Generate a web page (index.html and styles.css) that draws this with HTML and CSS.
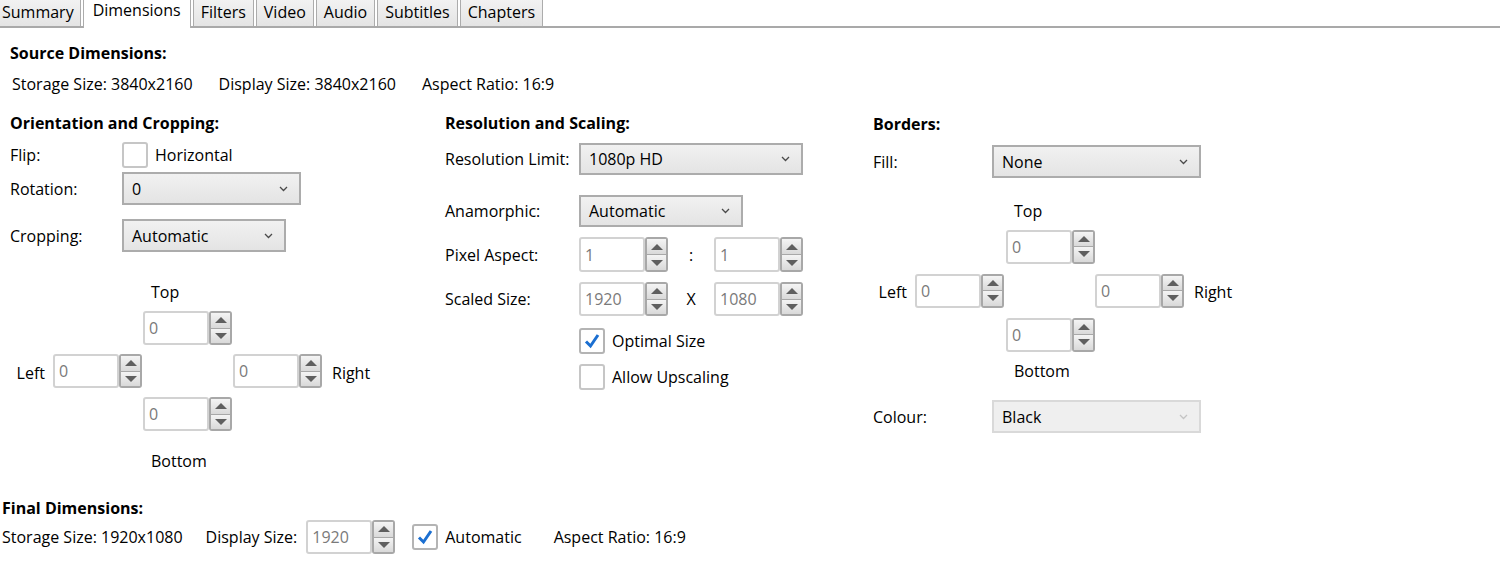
FILE: index.html
```html
<!DOCTYPE html>
<html lang="en">
<head>
    <meta charset="UTF-8">
    <title>Dimensions</title>
    <link rel="stylesheet" href="styles.css">
</head>
<body>
    <div class="tabs">
        <div class="tab tab-first">Summary</div>
        <div class="tab active">Dimensions</div>
        <div class="tab">Filters</div>
        <div class="tab">Video</div>
        <div class="tab">Audio</div>
        <div class="tab">Subtitles</div>
        <div class="tab">Chapters</div>
    </div>

    <div class="content">
        <div class="heading source-heading">Source Dimensions:</div>
        <div class="info-row">
            <span>Storage Size: 3840x2160</span>
            <span>Display Size: 3840x2160</span>
            <span>Aspect Ratio: 16:9</span>
        </div>

        <div class="columns">
            <!-- orientation and cropping -->
            <div class="col col-orient">
                <div class="heading">Orientation and Cropping:</div>
                <div class="field flip-row">
                    <span class="field-label">Flip:</span>
                    <span class="check"></span>
                    <span class="check-text">Horizontal</span>
                </div>
                <div class="field rotation-row">
                    <span class="field-label">Rotation:</span>
                    <div class="select select-rotation"><span>0</span><svg class="chev" viewBox="0 0 9 6"><polyline points="1,1 4.5,4.5 8,1"/></svg></div>
                </div>
                <div class="field cropping-row">
                    <span class="field-label">Cropping:</span>
                    <div class="select select-crop"><span>Automatic</span><svg class="chev" viewBox="0 0 9 6"><polyline points="1,1 4.5,4.5 8,1"/></svg></div>
                </div>

                <div class="cross cross-crop">
                    <span class="cross-top">Top</span>
                    <div class="spin pos-top"><input class="spin-input" value="0"><div class="spin-btn"><span class="arrow-up"></span><span class="arrow-down"></span></div></div>
                    <span class="cross-left">Left</span>
                    <div class="spin pos-left"><input class="spin-input" value="0"><div class="spin-btn"><span class="arrow-up"></span><span class="arrow-down"></span></div></div>
                    <div class="spin pos-right"><input class="spin-input" value="0"><div class="spin-btn"><span class="arrow-up"></span><span class="arrow-down"></span></div></div>
                    <span class="cross-right">Right</span>
                    <div class="spin pos-bottom"><input class="spin-input" value="0"><div class="spin-btn"><span class="arrow-up"></span><span class="arrow-down"></span></div></div>
                    <span class="cross-bottom">Bottom</span>
                </div>
            </div>

            <!-- resolution and scaling -->
            <div class="col col-res">
                <div class="heading">Resolution and Scaling:</div>
                <div class="field res-row">
                    <span class="field-label">Resolution Limit:</span>
                    <div class="select select-res"><span>1080p HD</span><svg class="chev" viewBox="0 0 9 6"><polyline points="1,1 4.5,4.5 8,1"/></svg></div>
                </div>
                <div class="field ana-row">
                    <span class="field-label">Anamorphic:</span>
                    <div class="select select-ana"><span>Automatic</span><svg class="chev" viewBox="0 0 9 6"><polyline points="1,1 4.5,4.5 8,1"/></svg></div>
                </div>
                <div class="field pixel-row">
                    <span class="field-label">Pixel Aspect:</span>
                    <div class="spin"><input class="spin-input" value="1"><div class="spin-btn"><span class="arrow-up"></span><span class="arrow-down"></span></div></div>
                    <span class="sep">:</span>
                    <div class="spin"><input class="spin-input" value="1"><div class="spin-btn"><span class="arrow-up"></span><span class="arrow-down"></span></div></div>
                </div>
                <div class="field scaled-row">
                    <span class="field-label">Scaled Size:</span>
                    <div class="spin"><input class="spin-input" value="1920"><div class="spin-btn"><span class="arrow-up"></span><span class="arrow-down"></span></div></div>
                    <span class="sep">X</span>
                    <div class="spin"><input class="spin-input" value="1080"><div class="spin-btn"><span class="arrow-up"></span><span class="arrow-down"></span></div></div>
                </div>
                <div class="field optimal-row">
                    <span class="field-label"></span>
                    <span class="check checked"><svg viewBox="0 0 22 22"><polyline points="5,11.5 9.5,16 17,5"/></svg></span>
                    <span class="check-text">Optimal Size</span>
                </div>
                <div class="field upscale-row">
                    <span class="field-label"></span>
                    <span class="check"></span>
                    <span class="check-text">Allow Upscaling</span>
                </div>
            </div>

            <!-- borders -->
            <div class="col col-borders">
                <div class="heading">Borders:</div>
                <div class="field fill-row">
                    <span class="field-label">Fill:</span>
                    <div class="select select-fill"><span>None</span><svg class="chev" viewBox="0 0 9 6"><polyline points="1,1 4.5,4.5 8,1"/></svg></div>
                </div>

                <div class="cross cross-borders">
                    <span class="cross-top">Top</span>
                    <div class="spin pos-top"><input class="spin-input" value="0"><div class="spin-btn"><span class="arrow-up"></span><span class="arrow-down"></span></div></div>
                    <span class="cross-left">Left</span>
                    <div class="spin pos-left"><input class="spin-input" value="0"><div class="spin-btn"><span class="arrow-up"></span><span class="arrow-down"></span></div></div>
                    <div class="spin pos-right"><input class="spin-input" value="0"><div class="spin-btn"><span class="arrow-up"></span><span class="arrow-down"></span></div></div>
                    <span class="cross-right">Right</span>
                    <div class="spin pos-bottom"><input class="spin-input" value="0"><div class="spin-btn"><span class="arrow-up"></span><span class="arrow-down"></span></div></div>
                    <span class="cross-bottom">Bottom</span>
                </div>

                <div class="field colour-row">
                    <span class="field-label">Colour:</span>
                    <div class="select select-fill disabled"><span>Black</span><svg class="chev" viewBox="0 0 9 6"><polyline points="1,1 4.5,4.5 8,1"/></svg></div>
                </div>
            </div>
        </div>
    </div>

    <div class="final">
        <div class="heading">Final Dimensions:</div>
        <div class="final-row">
            <span class="final-storage">Storage Size: 1920x1080</span>
            <span class="final-display">Display Size:</span>
            <div class="spin"><input class="spin-input" value="1920"><div class="spin-btn"><span class="arrow-up"></span><span class="arrow-down"></span></div></div>
            <span class="check checked"><svg viewBox="0 0 22 22"><polyline points="5,11.5 9.5,16 17,5"/></svg></span>
            <span class="check-text">Automatic</span>
            <span class="final-aspect">Aspect Ratio: 16:9</span>
        </div>
    </div>
</body>
</html>
```

FILE: styles.css
```css
body {
    margin: 0;
    font-family: "Open Sans", "Noto Sans", sans-serif;
    font-size: 16px;
    color: #000;
    background-color: #fff;
}

/* tab strip */
.tabs {
    display: flex;
    height: 26px;
    border-bottom: 2px solid #a9a9a9;
}
.tab {
    box-sizing: border-box;
    height: 26px;
    line-height: 24px;
    padding: 0 7px;
    margin-right: 2px;
    border: 1px solid #acacac;
    border-top: none;
    border-bottom: none;
    background: linear-gradient(#f2f2f2, #e4e4e4);
}
.tab-first {
    border-left: none;
    padding-left: 2px;
    padding-right: 6px;
}
.tab.active {
    height: 28px;
    line-height: 20px;
    background: #fff;
    margin-bottom: -2px;
    padding: 0 9px;
}

.content {
    padding: 0 10px;
}
.heading {
    font-weight: 700;
    line-height: 20px;
}
.source-heading {
    margin-top: 15px;
}
.info-row {
    display: flex;
    gap: 26px;
    margin-top: 11px;
    padding-left: 2px;
    line-height: 20px;
}

.columns {
    display: grid;
    grid-template-columns: 435px 428px 1fr;
    margin-top: 19px;
}
.col-borders .heading {
    margin-top: 1px;
}

.field {
    display: flex;
    align-items: center;
}
.col-orient .field-label {
    width: 112px;
}
.col-res .field-label {
    width: 134px;
}
.col-borders .field-label {
    width: 119px;
}

.flip-row { margin-top: 9px; }
.rotation-row { margin-top: 4px; }
.cropping-row { margin-top: 14px; }
.res-row { margin-top: 10px; }
.ana-row { margin-top: 20px; }
.pixel-row { margin-top: 10px; }
.scaled-row { margin-top: 10px; }
.optimal-row { margin-top: 12px; }
.upscale-row { margin-top: 10px; }
.fill-row { margin-top: 11px; }
.colour-row { margin-top: 19px; }

/* check boxes */
.check {
    box-sizing: border-box;
    width: 26px;
    height: 26px;
    border: 2px solid #c6c6c6;
    border-radius: 3px;
    background: #fff;
    display: flex;
    align-items: center;
    justify-content: center;
}
.check.checked {
    border-color: #b4b4b4;
}
.check svg {
    width: 22px;
    height: 22px;
}
.check polyline {
    fill: none;
    stroke: #1b6fd1;
    stroke-width: 3;
}
.check-text {
    margin-left: 7px;
    line-height: 20px;
}

/* drop downs */
.select {
    box-sizing: border-box;
    height: 33px;
    border: 2px solid #acacac;
    background: linear-gradient(#f1f1f1, #e4e4e4);
    display: flex;
    align-items: center;
    justify-content: space-between;
    padding: 0 11px 0 8px;
}
.select .chev {
    width: 9px;
    height: 6px;
}
.chev polyline {
    fill: none;
    stroke: #4a4a4a;
    stroke-width: 1.3;
}
.select.disabled {
    background: #efefef;
    border-color: #d9d9d9;
}
.select.disabled .chev polyline {
    stroke: #c4c4c4;
}
.select-rotation { width: 179px; }
.select-crop { width: 164px; }
.select-res { width: 224px; height: 32px; }
.select-ana { width: 164px; height: 32px; }
.select-fill { width: 209px; }

/* spinners */
.spin {
    display: flex;
    height: 34px;
}
.spin-input {
    box-sizing: border-box;
    width: 66px;
    height: 34px;
    border: 2px solid #d2d2d2;
    border-radius: 3px;
    padding: 0 0 0 4px;
    font-family: inherit;
    font-size: 16px;
    color: #7a7a7a;
    background: #fff;
    outline: none;
}
.spin-btn {
    box-sizing: border-box;
    width: 23px;
    height: 34px;
    border: 2px solid #a8a8a8;
    border-radius: 3px;
    display: flex;
    flex-direction: column;
    background: #a8a8a8;
    gap: 1px;
}
.spin-btn span {
    flex: 1;
    background: linear-gradient(#f4f4f4, #d9d9d9);
    display: flex;
    align-items: center;
    justify-content: center;
}
.arrow-up::before,
.arrow-down::before {
    content: "";
    border-left: 6px solid transparent;
    border-right: 6px solid transparent;
}
.arrow-up::before {
    border-bottom: 6px solid #5f5f5f;
}
.arrow-down::before {
    border-top: 6px solid #5f5f5f;
}
.sep {
    width: 46px;
    text-align: center;
}
.pixel-row .spin,
.pixel-row .spin-input,
.pixel-row .spin-btn {
    height: 35px;
}

/* top/left/right/bottom cross */
.cross {
    display: grid;
    grid-template-columns: 43px 90px 90px 90px auto;
    align-items: center;
}
.cross-top,
.cross-bottom {
    grid-column: 3;
    padding-left: 8px;
    line-height: 20px;
}
.pos-top,
.pos-bottom {
    grid-column: 3;
}
.cross-left {
    grid-column: 1;
    text-align: right;
    padding-right: 8px;
    padding-top: 4px;
}
.pos-left { grid-column: 2; }
.pos-right { grid-column: 4; }
.cross-right {
    grid-column: 5;
    padding-left: 9px;
    padding-top: 4px;
}
.cross-crop {
    margin-top: 30px;
    grid-template-rows: 20px 34px 34px 34px auto;
    row-gap: 9px;
}
.cross-crop .cross-bottom {
    margin-top: 11px;
}
.cross-borders {
    margin-top: 22px;
    grid-template-columns: 42px 91px 89px 90px auto;
    grid-template-rows: 20px 35px 35px 35px 20px;
    row-gap: 9px;
}
.cross-borders .cross-top {
    margin-bottom: -1px;
}
.cross-borders .cross-left,
.cross-borders .cross-right {
    padding-top: 2px;
}

/* final dimensions */
.final {
    padding: 0 2px;
    margin-top: 27px;
}
.final-row {
    display: flex;
    align-items: center;
    margin-top: 2px;
}
.final-display {
    margin-left: 23px;
    margin-right: 9px;
}
.final-row .check {
    margin-left: 17px;
}
.final-aspect {
    margin-left: 32px;
}
```
